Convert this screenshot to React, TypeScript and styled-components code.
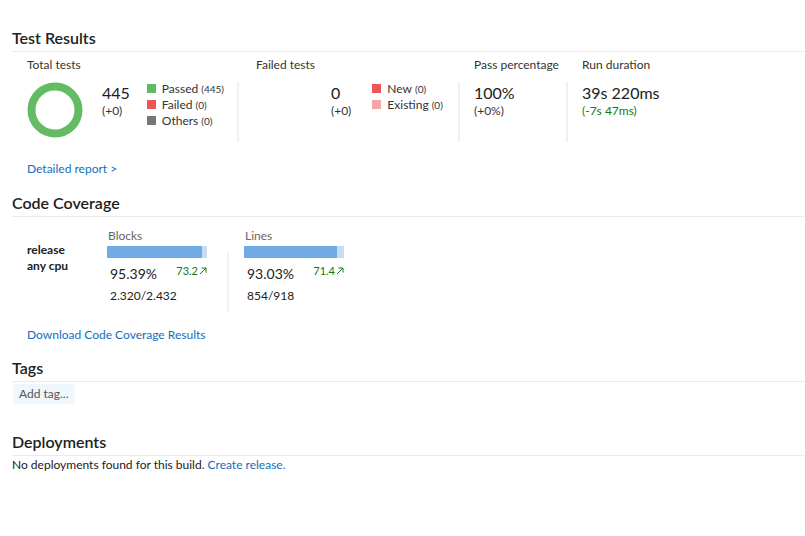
import React from "react";
import styled, { createGlobalStyle } from "styled-components";

const GlobalStyle = createGlobalStyle`
    body {
        margin: 0;
        background: #fff;
        font-family: "Lato", "Open Sans", sans-serif;
        color: #212121;
    }
`;

interface LegendItem {
    label: string;
    count: number;
    color: string;
}

const totalLegend: LegendItem[] = [
    { label: "Passed", count: 445, color: "#5fbb5f" },
    { label: "Failed", count: 0, color: "#ee5555" },
    { label: "Others", count: 0, color: "#777777" },
];

const failedLegend: LegendItem[] = [
    { label: "New", count: 0, color: "#ee5555" },
    { label: "Existing", count: 0, color: "#f4a7a7" },
];

interface Coverage {
    title: string;
    percent: number;
    delta: string;
    covered: string;
}

const coverage: Coverage[] = [
    { title: "Blocks", percent: 95.39, delta: "73.2", covered: "2.320/2.432" },
    { title: "Lines", percent: 93.03, delta: "71.4", covered: "854/918" },
];

const Donut: React.FC = () => {
    const r = 23.5;
    const c = 2 * Math.PI * r;
    return (
        <svg width="56" height="56" viewBox="0 0 56 56">
            <circle
                cx="28"
                cy="28"
                r={r}
                fill="none"
                stroke="#63bc63"
                strokeWidth="8"
                strokeDasharray={`${c - 1} ${c}`}
                transform="rotate(-89 28 28)"
            />
        </svg>
    );
};

const UpArrow: React.FC = () => (
    <svg width="8" height="8" viewBox="0 0 8 8">
        <path d="M1 7 L7 1 M2.5 1 H7 V5.5" fill="none" stroke="#107c10" strokeWidth="1" />
    </svg>
);

const Legend: React.FC<{ items: LegendItem[] }> = ({ items }) => (
    <LegendList>
        {items.map((item) => (
            <LegendRow key={item.label}>
                <Swatch color={item.color} />
                {item.label}
                <SmallCount>({item.count})</SmallCount>
            </LegendRow>
        ))}
    </LegendList>
);

const App: React.FC = () => {
    return (
        <Page>
            <GlobalStyle />
            <Section>
                <Heading>Test Results</Heading>
                <Summary>
                    <Column width={212} indent={15}>
                        <Label>Total tests</Label>
                        <Body divided>
                            <Donut />
                            <Figure indent={19}>
                                <BigNumber>445</BigNumber>
                                <Delta>(+0)</Delta>
                            </Figure>
                            <LegendSpacer width={17} />
                            <Legend items={totalLegend} />
                        </Body>
                    </Column>
                    <Column width={204} indent={17}>
                        <Label>Failed tests</Label>
                        <Body divided>
                            <Figure indent={75}>
                                <BigNumber>0</BigNumber>
                                <Delta>(+0)</Delta>
                            </Figure>
                            <LegendSpacer width={21} />
                            <Legend items={failedLegend} />
                        </Body>
                    </Column>
                    <Column width={94} indent={14}>
                        <Label>Pass percentage</Label>
                        <Body divided>
                            <Figure>
                                <BigNumber>100%</BigNumber>
                                <Delta>(+0%)</Delta>
                            </Figure>
                        </Body>
                    </Column>
                    <Column width={200} indent={14}>
                        <Label>Run duration</Label>
                        <Body>
                            <Figure>
                                <BigNumber>39s 220ms</BigNumber>
                                <Delta good>(-7s 47ms)</Delta>
                            </Figure>
                        </Body>
                    </Column>
                </Summary>
                <ActionLink gap={19}>Detailed report &gt;</ActionLink>
            </Section>

            <Section gap={16}>
                <Heading>Code Coverage</Heading>
                <CoverageRow>
                    <Config>
                        <div>release</div>
                        <div>any cpu</div>
                    </Config>
                    {coverage.map((cov, i) => (
                        <React.Fragment key={cov.title}>
                            {i > 0 && <VDivider />}
                            <CoverageCell>
                                <CovLabel>{cov.title}</CovLabel>
                                <Bar>
                                    <BarFill style={{ width: `${cov.percent}%` }} />
                                </Bar>
                                <PctRow>
                                    <Pct>{cov.percent.toFixed(2)}%</Pct>
                                    <Trend>
                                        {cov.delta}
                                        <UpArrow />
                                    </Trend>
                                </PctRow>
                                <Covered>{cov.covered}</Covered>
                            </CoverageCell>
                        </React.Fragment>
                    ))}
                </CoverageRow>
                <ActionLink gap={15}>Download Code Coverage Results</ActionLink>
            </Section>

            <Section gap={15}>
                <Heading>Tags</Heading>
                <TagButton>Add tag...</TagButton>
            </Section>

            <Section gap={28}>
                <Heading>Deployments</Heading>
                <Message>
                    No deployments found for this build. <InlineLink>Create release.</InlineLink>
                </Message>
            </Section>
        </Page>
    );
};

export default App;

const Page = styled.div`
    padding: 28px 0 40px 12px;
    font-size: 12px;
`;

const Section = styled.section<{ gap?: number }>`
    margin-top: ${(p) => p.gap ?? 0}px;
`;

const Heading = styled.h2`
    margin: 0;
    font-size: 16px;
    line-height: 20px;
    font-weight: 600;
    color: #212121;
    padding-bottom: 3px;
    border-bottom: 1px solid #eaeaea;
`;

const Summary = styled.div`
    display: flex;
    margin-top: 5px;
`;

const Column = styled.div<{ width: number; indent: number }>`
    width: ${(p) => p.width}px;
    padding-left: ${(p) => p.indent}px;
    flex-shrink: 0;
`;

const Label = styled.div`
    line-height: 16px;
    color: #333;
    margin-bottom: 9px;
`;

const Body = styled.div<{ divided?: boolean }>`
    display: flex;
    align-items: flex-start;
    height: 60px;
    border-right: 2px solid ${(p) => (p.divided ? "#f0f0f0" : "transparent")};
`;

const Figure = styled.div<{ indent?: number }>`
    margin-left: ${(p) => p.indent ?? 0}px;
    padding-top: 1px;
`;

const BigNumber = styled.div`
    font-size: 16px;
    line-height: 20px;
    color: #212121;
`;

const Delta = styled.div<{ good?: boolean }>`
    line-height: 16px;
    color: ${(p) => (p.good ? "#107c10" : "#333")};
`;

const LegendSpacer = styled.div<{ width: number }>`
    width: ${(p) => p.width}px;
    flex-shrink: 0;
`;

const LegendList = styled.div`
    display: flex;
    flex-direction: column;
    margin-top: -1px;
`;

const LegendRow = styled.div`
    display: flex;
    align-items: center;
    line-height: 16px;
    color: #333;
`;

const Swatch = styled.span<{ color: string }>`
    width: 9px;
    height: 9px;
    background: ${(p) => p.color};
    margin-right: 6px;
    margin-top: -2px;
`;

const SmallCount = styled.span`
    font-size: 10px;
    margin-left: 3px;
`;

const ActionLink = styled.div<{ gap: number }>`
    margin: ${(p) => p.gap}px 0 0 15px;
    line-height: 16px;
    color: #106ebe;
    cursor: pointer;
`;

const CoverageRow = styled.div`
    display: flex;
    align-items: flex-start;
    margin-top: 11px;
    padding-left: 15px;
`;

const Config = styled.div`
    width: 80px;
    margin-top: 14px;
    font-weight: 700;
    line-height: 16px;
    color: #212121;
`;

const CoverageCell = styled.div`
    width: 100px;
    padding-right: 20px;
`;

const VDivider = styled.div`
    width: 2px;
    height: 60px;
    margin-top: 24px;
    margin-right: 15px;
    background: #f0f0f0;
`;

const CovLabel = styled.div`
    line-height: 16px;
    color: #666;
    padding-left: 1px;
`;

const Bar = styled.div`
    height: 12px;
    margin-top: 2px;
    background: #c7ddf4;
`;

const BarFill = styled.div`
    height: 100%;
    background: #71abe5;
`;

const PctRow = styled.div`
    display: flex;
    justify-content: space-between;
    align-items: flex-start;
    margin-top: 6px;
    padding-left: 3px;
`;

const Pct = styled.div`
    font-size: 14px;
    line-height: 20px;
`;

const Trend = styled.div`
    display: flex;
    align-items: center;
    gap: 1px;
    font-size: 11px;
    line-height: 14px;
    color: #107c10;
`;

const Covered = styled.div`
    margin-top: 4px;
    line-height: 16px;
    padding-left: 3px;
`;

const TagButton = styled.div`
    display: inline-block;
    margin: 2px 0 0 1px;
    padding: 0 6px;
    height: 20px;
    line-height: 20px;
    background: #eff6fc;
    color: #555;
`;

const Message = styled.div`
    margin-top: 1px;
    line-height: 16px;
    color: #212121;
`;

const InlineLink = styled.span`
    color: #106ebe;
    cursor: pointer;
`;
